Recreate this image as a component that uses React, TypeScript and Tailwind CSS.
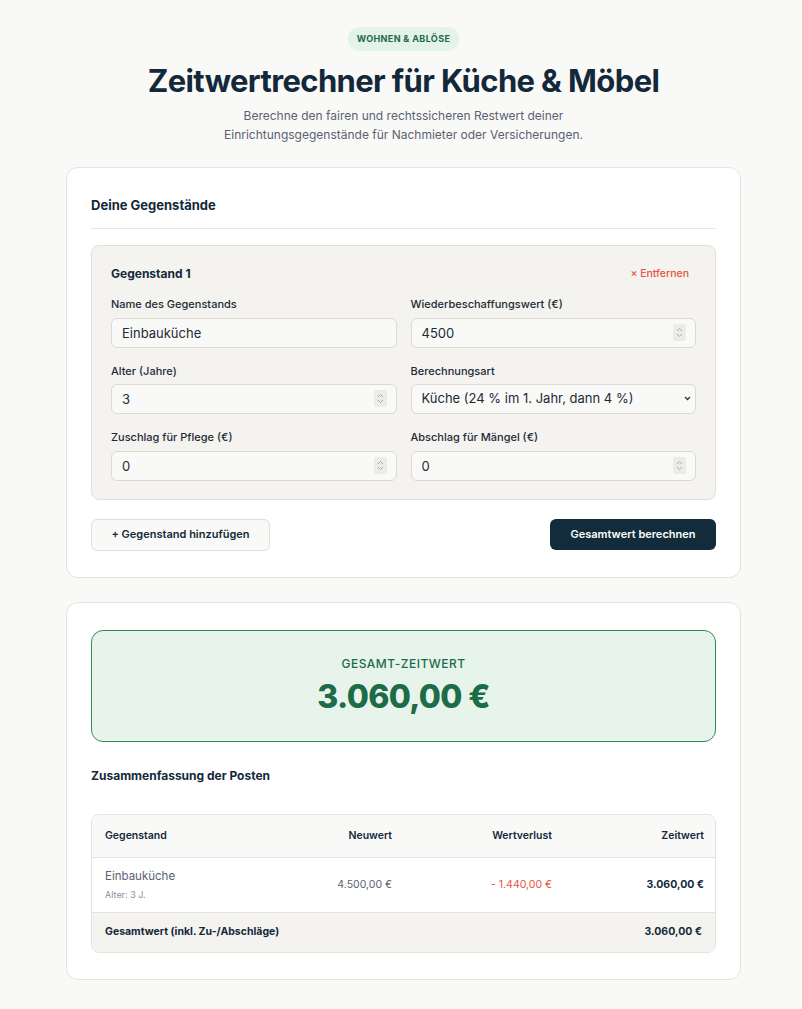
import { useState } from 'react';

type Item = {
  id: number;
  name: string;
  price: number;
  age: number;
  mode: string;
  bonus: number;
  malus: number;
};

const modes = [
  { value: 'kueche', label: 'Küche (24 % im 1. Jahr, dann 4 %)' },
  { value: 'moebel', label: 'Möbel (10 % pro Jahr)' },
];

const eur = (n: number) =>
  n.toLocaleString('de-DE', { minimumFractionDigits: 2, maximumFractionDigits: 2 }) + ' €';

const lossFor = (it: Item) => {
  if (it.mode === 'kueche') {
    if (it.age <= 0) return 0;
    const pct = Math.min(100, 24 + (it.age - 1) * 4);
    return (it.price * pct) / 100;
  }
  return (it.price * Math.min(100, it.age * 10)) / 100;
};

const inputCls =
  'h-[30px] w-full appearance-none rounded-md border border-[#dcd9d3] bg-[#f9f9f7] px-[10px] text-[13px] text-[#1c2b36] outline-none [&::-webkit-inner-spin-button]:appearance-none [&::-webkit-outer-spin-button]:appearance-none';

const Field = ({ label, children }: { label: string; children: React.ReactNode }) => (
  <label className="flex flex-col gap-[5px]">
    <span className="text-[11px] font-medium text-[#1c2b36]">{label}</span>
    {children}
  </label>
);

// number input with a small always-visible stepper
const NumberInput = ({ value, onChange }: { value: number; onChange: (n: number) => void }) => (
  <div className="relative">
    <input
      type="number"
      className={inputCls + ' pr-8'}
      value={value}
      onChange={(e) => onChange(Number(e.target.value))}
    />
    <span className="pointer-events-none absolute right-[10px] top-[6px] flex h-[17px] w-[13px] items-center justify-center rounded-[2px] bg-[#ebebea]">
      <svg width="7" height="11" viewBox="0 0 7 11" fill="none" stroke="#a9abaf" strokeWidth="1">
        <path d="M1 4 3.5 1.5 6 4" />
        <path d="M1 7 3.5 9.5 6 7" />
      </svg>
    </span>
  </div>
);

export default function App() {
  const [items, setItems] = useState<Item[]>([
    { id: 1, name: 'Einbauküche', price: 4500, age: 3, mode: 'kueche', bonus: 0, malus: 0 },
  ]);

  const update = (id: number, patch: Partial<Item>) =>
    setItems((prev) => prev.map((it) => (it.id === id ? { ...it, ...patch } : it)));

  const rows = items.map((it) => {
    const loss = lossFor(it);
    return { ...it, loss, value: it.price - loss + it.bonus - it.malus };
  });
  const total = rows.reduce((s, r) => s + r.value, 0);

  return (
    <div
      className="min-h-screen bg-[#f9f9f8] pb-8 pl-[5px] text-[#1c2b36]"
      style={{ fontFamily: 'Inter, "Noto Sans", sans-serif' }}
    >
      <div className="mx-auto w-[675px]">
        {/* Header */}
        <header className="flex flex-col items-center pt-[27px] text-center">
          <span className="rounded-full bg-[#e4f3ea] px-[9px] py-[5px] text-[9px] font-bold uppercase tracking-[0.04em] text-[#1d6b47]">
            Wohnen &amp; Ablöse
          </span>
          <h1 className="mt-[11px] text-[31px] font-bold leading-[38px] tracking-[-0.02em] text-[#13293a]">
            Zeitwertrechner für Küche &amp; Möbel
          </h1>
          <p className="mt-[6px] text-[12px] leading-[19px] text-[#5b6270]">
            Berechne den fairen und rechtssicheren Restwert deiner
            <br />
            Einrichtungsgegenstände für Nachmieter oder Versicherungen.
          </p>
        </header>

        {/* Form card */}
        <section className="mt-[23px] rounded-xl border border-[#e5e3de] bg-white px-6 pb-[26px] pt-[28px]">
          <h2 className="border-b border-[#e8e6e2] pb-[13px] text-[13px] font-bold text-[#13293a]">
            Deine Gegenstände
          </h2>

          <div className="mt-[16px] flex flex-col gap-4">
            {items.map((it, idx) => (
              <div
                key={it.id}
                className="rounded-lg border border-[#e3e0da] bg-[#f4f3ef] px-[19px] pb-[18px] pt-[19px]"
              >
                <div className="flex items-center justify-between">
                  <h3 className="text-[12px] font-bold text-[#13293a]">Gegenstand {idx + 1}</h3>
                  <button
                    className="pr-[7px] text-[10.5px] font-medium text-[#e4533f]"
                    onClick={() => setItems((prev) => prev.filter((p) => p.id !== it.id))}
                  >
                    × Entfernen
                  </button>
                </div>

                <div className="mt-[13px] grid grid-cols-2 gap-x-[14px] gap-y-[15px]">
                  <Field label="Name des Gegenstands">
                    <input
                      className={inputCls}
                      value={it.name}
                      onChange={(e) => update(it.id, { name: e.target.value })}
                    />
                  </Field>
                  <Field label="Wiederbeschaffungswert (€)">
                    <NumberInput value={it.price} onChange={(n) => update(it.id, { price: n })} />
                  </Field>
                  <Field label="Alter (Jahre)">
                    <NumberInput value={it.age} onChange={(n) => update(it.id, { age: n })} />
                  </Field>
                  <Field label="Berechnungsart">
                    <div className="relative">
                      <select
                        className={inputCls + ' pr-7'}
                        value={it.mode}
                        onChange={(e) => update(it.id, { mode: e.target.value })}
                      >
                        {modes.map((m) => (
                          <option key={m.value} value={m.value}>
                            {m.label}
                          </option>
                        ))}
                      </select>
                      <svg
                        className="pointer-events-none absolute right-[5px] top-[12px]"
                        width="7"
                        height="5"
                        viewBox="0 0 7 5"
                        fill="none"
                        stroke="#2a3440"
                        strokeWidth="1.3"
                      >
                        <path d="M1 1 3.5 3.5 6 1" />
                      </svg>
                    </div>
                  </Field>
                  <Field label="Zuschlag für Pflege (€)">
                    <NumberInput value={it.bonus} onChange={(n) => update(it.id, { bonus: n })} />
                  </Field>
                  <Field label="Abschlag für Mängel (€)">
                    <NumberInput value={it.malus} onChange={(n) => update(it.id, { malus: n })} />
                  </Field>
                </div>
              </div>
            ))}
          </div>

          <div className="mt-[19px] flex items-center justify-between">
            <button
              className="h-[32px] w-[179px] rounded-md border border-[#e1ded8] bg-[#f9f9f7] text-[11px] font-semibold text-[#13293a]"
              onClick={() =>
                setItems((prev) => [
                  ...prev,
                  { id: Date.now(), name: '', price: 0, age: 0, mode: 'kueche', bonus: 0, malus: 0 },
                ])
              }
            >
              + Gegenstand hinzufügen
            </button>
            <button className="h-[31px] w-[166px] rounded-md bg-[#132c3b] text-[11px] font-semibold text-white">
              Gesamtwert berechnen
            </button>
          </div>
        </section>

        {/* Result card */}
        <section className="mt-[24px] rounded-xl border border-[#e5e3de] bg-white px-6 pb-[26px] pt-[27px]">
          <div className="flex h-[112px] flex-col items-center justify-center rounded-xl border border-[#2f8a5e] bg-[#e7f4ec]">
            <span className="text-[12px] font-medium uppercase tracking-[0.04em] text-[#1d6b47]">
              Gesamt-Zeitwert
            </span>
            <span className="mt-[4px] text-[32px] font-extrabold leading-[40px] tracking-[-0.02em] text-[#1d6b47]">
              {eur(total)}
            </span>
          </div>

          <h2 className="mt-[25px] text-[12px] font-bold text-[#13293a]">Zusammenfassung der Posten</h2>

          <div className="mt-[29px] overflow-hidden rounded-lg border border-[#e5e3de] text-[10.5px]">
            <div className="grid h-[43px] grid-cols-[170px_143px_160px_152px] items-center border-b border-[#e5e3de] bg-[#f9f9f7] font-semibold text-[#13293a]">
              <span className="pl-[13px]">Gegenstand</span>
              <span className="pr-[13px] text-right">Neuwert</span>
              <span className="pr-[13px] text-right">Wertverlust</span>
              <span className="pr-[13px] text-right">Zeitwert</span>
            </div>
            {rows.map((r) => (
              <div
                key={r.id}
                className="grid h-[55px] grid-cols-[170px_143px_160px_152px] items-center border-b border-[#e5e3de] bg-white"
              >
                <div className="flex flex-col gap-[3px] pl-[13px]">
                  <span className="text-[11.5px] text-[#5b6270]">{r.name}</span>
                  <span className="text-[9px] text-[#8a8f99]">Alter: {r.age} J.</span>
                </div>
                <span className="pr-[13px] text-right text-[#5b6270]">{eur(r.price)}</span>
                <span className="pr-[13px] text-right text-[#e4533f]">- {eur(r.loss)}</span>
                <span className="pr-[13px] text-right font-bold text-[#13293a]">{eur(r.value)}</span>
              </div>
            ))}
            <div className="flex h-[39px] items-center justify-between bg-[#f4f3ef] px-[13px] font-bold text-[#13293a]">
              <span>Gesamtwert (inkl. Zu-/Abschläge)</span>
              <span>{eur(total)}</span>
            </div>
          </div>
        </section>
      </div>
    </div>
  );
}
